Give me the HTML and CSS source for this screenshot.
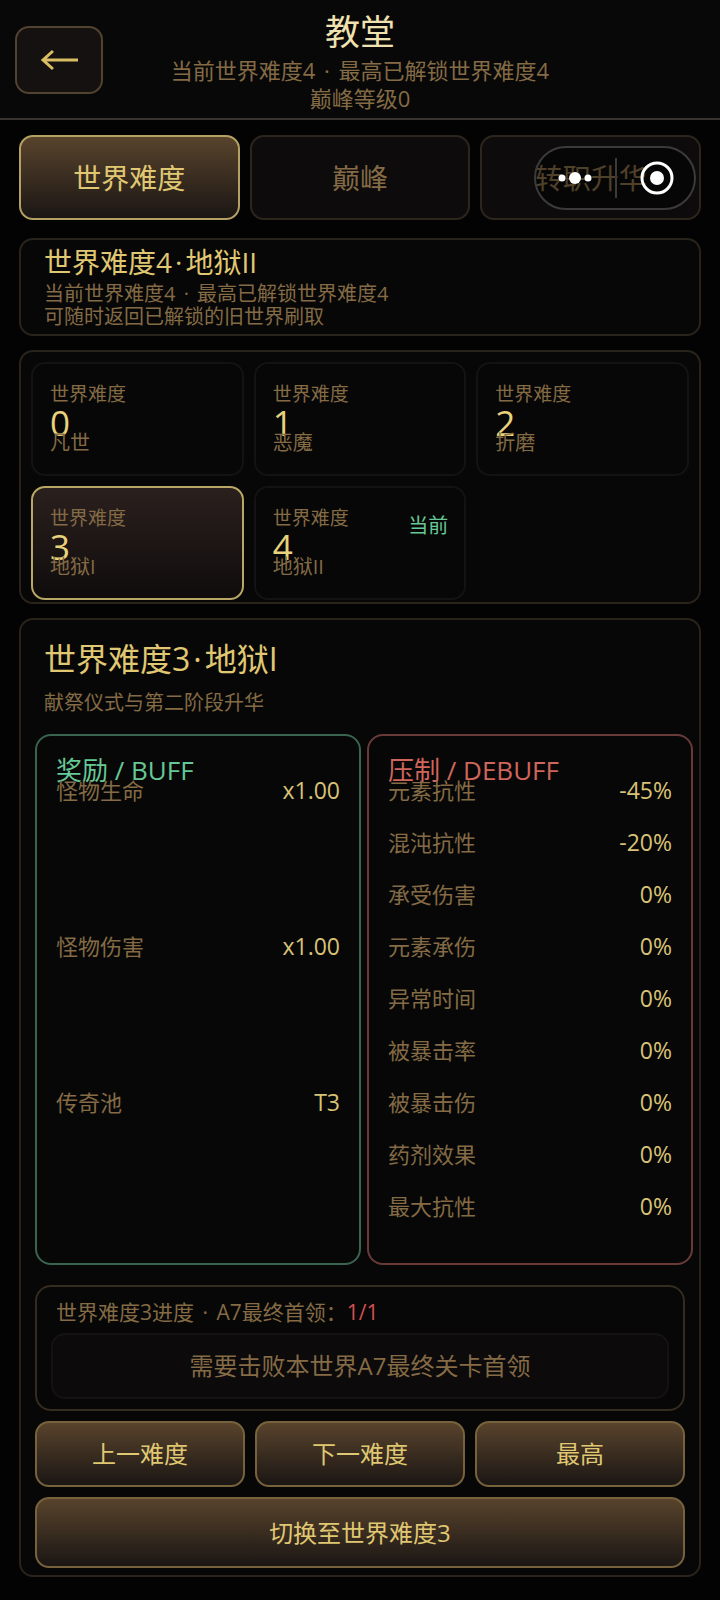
FILE: index.html
```
<!DOCTYPE html>
<html lang="zh-CN">
<head>
    <meta charset="UTF-8">
    <meta name="viewport" content="width=device-width, initial-scale=1.0">
    <title>教堂</title>
    <link rel="stylesheet" href="styles.css">
</head>
<body>
    <header class="topbar">
        <button class="back" type="button" aria-label="返回">
            <svg width="40" height="24" viewBox="0 0 40 24" fill="none" stroke="currentColor" stroke-width="3">
                <path d="M39 12H4M14 3L4 12L14 21"/>
            </svg>
        </button>
        <div class="heading">
            <h1>教堂</h1>
            <p>当前世界难度4 <span class="dot">·</span> 最高已解锁世界难度4</p>
            <p>巅峰等级0</p>
        </div>
    </header>

    <!-- 小程序胶囊按钮 -->
    <div class="capsule">
        <button type="button" aria-label="更多">
            <svg width="36" height="16" viewBox="0 0 36 16" fill="#fff">
                <circle cx="4" cy="8" r="3.5"/>
                <circle cx="17" cy="8" r="6"/>
                <circle cx="30" cy="8" r="3.5"/>
            </svg>
        </button>
        <button type="button" aria-label="关闭">
            <svg width="34" height="34" viewBox="0 0 34 34">
                <circle cx="17" cy="17" r="15" fill="none" stroke="#fff" stroke-width="3"/>
                <circle cx="17" cy="17" r="7" fill="#fff"/>
            </svg>
        </button>
    </div>

    <main class="container">
        <nav class="tabs">
            <button class="tab active" type="button">世界难度</button>
            <button class="tab" type="button">巅峰</button>
            <button class="tab" type="button">转职升华</button>
        </nav>

        <section class="panel summary">
            <h2>世界难度4<span class="dot">·</span>地狱II</h2>
            <p>当前世界难度4 <span class="dot">·</span> 最高已解锁世界难度4</p>
            <p>可随时返回已解锁的旧世界刷取</p>
        </section>

        <section class="panel levels">
            <button class="level" type="button">
                <span class="level-label">世界难度</span>
                <span class="level-number">0</span>
                <span class="level-name">凡世</span>
            </button>
            <button class="level" type="button">
                <span class="level-label">世界难度</span>
                <span class="level-number">1</span>
                <span class="level-name">恶魔</span>
            </button>
            <button class="level" type="button">
                <span class="level-label">世界难度</span>
                <span class="level-number">2</span>
                <span class="level-name">折磨</span>
            </button>
            <button class="level selected" type="button">
                <span class="level-label">世界难度</span>
                <span class="level-number">3</span>
                <span class="level-name">地狱I</span>
            </button>
            <button class="level" type="button">
                <span class="level-label">世界难度</span>
                <span class="level-number">4</span>
                <span class="level-name">地狱II</span>
                <span class="level-badge">当前</span>
            </button>
        </section>

        <section class="panel detail">
            <h2>世界难度3<span class="dot">·</span>地狱I</h2>
            <p class="desc">献祭仪式与第二阶段升华</p>

            <div class="stats">
                <div class="stat-box buff">
                    <h3>奖励 / BUFF</h3>
                    <dl>
                        <div><dt>怪物生命</dt><dd>x1.00</dd></div>
                        <div><dt>怪物伤害</dt><dd>x1.00</dd></div>
                        <div><dt>传奇池</dt><dd>T3</dd></div>
                    </dl>
                </div>
                <div class="stat-box debuff">
                    <h3>压制 / DEBUFF</h3>
                    <dl>
                        <div><dt>元素抗性</dt><dd>-45%</dd></div>
                        <div><dt>混沌抗性</dt><dd>-20%</dd></div>
                        <div><dt>承受伤害</dt><dd>0%</dd></div>
                        <div><dt>元素承伤</dt><dd>0%</dd></div>
                        <div><dt>异常时间</dt><dd>0%</dd></div>
                        <div><dt>被暴击率</dt><dd>0%</dd></div>
                        <div><dt>被暴击伤</dt><dd>0%</dd></div>
                        <div><dt>药剂效果</dt><dd>0%</dd></div>
                        <div><dt>最大抗性</dt><dd>0%</dd></div>
                    </dl>
                </div>
            </div>

            <div class="progress">
                <p>世界难度3进度 <span class="dot">·</span> A7最终首领：<span class="count">1/1</span></p>
                <div class="hint">需要击败本世界A7最终关卡首领</div>
            </div>

            <div class="actions">
                <button class="btn" type="button">上一难度</button>
                <button class="btn" type="button">下一难度</button>
                <button class="btn" type="button">最高</button>
                <button class="btn btn-wide" type="button">切换至世界难度3</button>
            </div>
        </section>
    </main>
</body>
</html>
```
FILE: styles.css
```
* {
    box-sizing: border-box;
}

body {
    position: relative;
    margin: 0;
    background-color: #030303;
    color: #846b45;
    font-family: "Open Sans", "Noto Sans CJK SC", sans-serif;
}

h1, h2, h3, p, dl, dd {
    margin: 0;
    font-weight: normal;
}

button {
    margin: 0;
    padding: 0;
    border: 2px solid #2c261d;
    border-radius: 14px;
    background: none;
    color: inherit;
    font-family: inherit;
    cursor: pointer;
}

.dot {
    margin: 0 3px;
}

/* 顶栏 */
.topbar {
    display: grid;
    grid-template-columns: 88px 1fr 88px;
    align-items: center;
    height: 120px;
    padding: 2px 15px 0;
    border-bottom: 2px solid #38332d;
    background-color: #080808;
}

.back {
    display: flex;
    align-items: center;
    justify-content: center;
    height: 68px;
    border-color: #51432f;
    background-color: #151110;
    color: #d9bd62;
}

.heading {
    text-align: center;
}

.heading h1 {
    color: #f0e2b0;
    font-size: 35px;
    line-height: 48px;
}

.heading p {
    font-size: 22px;
    line-height: 28px;
}

/* 胶囊 */
.capsule {
    position: absolute;
    top: 146px;
    right: 24px;
    display: flex;
    width: 162px;
    height: 64px;
    border: 2px solid #3c3b3b;
    border-radius: 32px;
    background-color: rgba(0, 0, 0, 0.4);
}

.capsule button {
    display: flex;
    flex: 1;
    align-items: center;
    justify-content: center;
    border: 0;
}

.capsule button + button::before {
    content: "";
    width: 2px;
    height: 40px;
    margin-right: 23px;
    background-color: #3c3b3b;
}

.capsule button + button {
    justify-content: flex-start;
}

.container {
    display: flex;
    flex-direction: column;
    gap: 14px;
    padding: 15px 19px 23px;
}

/* 页签 */
.tabs {
    display: grid;
    grid-template-columns: repeat(3, 1fr);
    gap: 10px;
    margin-bottom: 4px;
}

.tab {
    height: 85px;
    padding-bottom: 2px;
    background-color: #0d0b0c;
    font-size: 28px;
}

.tab.active {
    border-color: #b3a062;
    background: linear-gradient(#58432c, #1b1614);
    color: #e0c873;
}

.panel {
    border: 2px solid #2a231b;
    border-radius: 14px;
    background-color: #070707;
}

.panel h2 {
    color: #e0c873;
}

.summary {
    padding: 2px 23px 6px;
}

.summary h2 {
    font-size: 28px;
    line-height: 40px;
}

.summary p {
    font-size: 20px;
    line-height: 23px;
}

/* 难度选择 */
.levels {
    display: grid;
    grid-template-columns: repeat(3, 1fr);
    gap: 10px;
    padding: 10px 10px 2px;
}

.level {
    position: relative;
    display: flex;
    flex-direction: column;
    height: 114px;
    padding: 13px 17px;
    border-color: #141212;
    font-size: 20px;
    text-align: left;
}

.level.selected {
    border-color: #b9a765;
    background: linear-gradient(#2a201e, #100c0c);
}

.level-label {
    font-size: 19px;
    line-height: 34px;
}

.level-number {
    color: #e8d27c;
    font-size: 35px;
    line-height: 24px;
}

.level-name {
    line-height: 16px;
}

.level-badge {
    position: absolute;
    top: 23px;
    right: 16px;
    color: #66c896;
    line-height: 30px;
}

/* 难度详情 */
.detail {
    padding: 15px 14px 7px;
}

.detail h2 {
    padding: 0 9px;
    font-size: 32px;
    line-height: 48px;
}

.desc {
    padding: 0 9px;
    font-size: 20px;
    line-height: 40px;
}

.stats {
    display: grid;
    grid-template-columns: repeat(2, 1fr);
    gap: 6px;
    margin: 11px -8px 20px 0;
}

.stat-box {
    display: flex;
    flex-direction: column;
    padding: 22px 19px 13px;
    border: 2px solid;
    border-radius: 16px;
}

.buff {
    border-color: #3a6350;
}

.debuff {
    border-color: #693b38;
}

.stat-box h3 {
    font-size: 26px;
    line-height: 24px;
}

.buff h3 {
    color: #66c896;
}

.debuff h3 {
    color: #d0655b;
}

.stat-box dl {
    display: flex;
    flex: 1;
    flex-direction: column;
}

.stat-box dl div {
    display: flex;
    flex: 1;
    justify-content: space-between;
    min-height: 52px;
    font-size: 22px;
    line-height: 16px;
}

.stat-box dd {
    color: #d8c275;
    font-size: 23px;
}

.progress {
    padding: 4px 14px 10px;
    border: 2px solid #352c20;
    border-radius: 16px;
}

.progress p {
    padding: 0 5px;
    font-size: 21px;
    line-height: 42px;
}

.count {
    color: #d54f50;
}

.hint {
    border: 2px solid #151213;
    border-radius: 14px;
    background-color: #0c0a0b;
    font-size: 24px;
    line-height: 62px;
    text-align: center;
}

.actions {
    display: grid;
    grid-template-columns: repeat(3, 1fr);
    gap: 10px;
    margin-top: 10px;
}

.btn {
    height: 66px;
    padding-bottom: 3px;
    border-color: #78623c;
    background: linear-gradient(#58432c, #1b1614);
    color: #e0c873;
    font-size: 24px;
}

.btn-wide {
    grid-column: 1 / -1;
    height: 71px;
}
```
